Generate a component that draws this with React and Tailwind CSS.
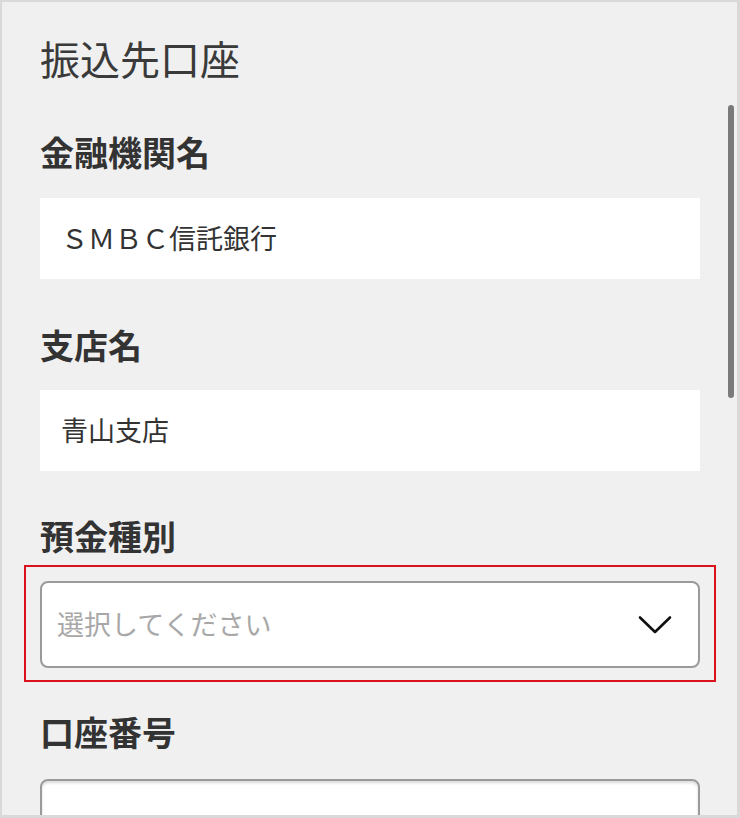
const font = { fontFamily: '"Noto Sans CJK JP", "Noto Sans", sans-serif' }

function Label({ children, className = '' }) {
  return (
    <div className={`h-[48px] leading-[48px] text-[34px] font-bold text-[#333] ${className}`}>
      {children}
    </div>
  )
}

function Chevron() {
  return (
    <svg width="34" height="20" viewBox="0 0 34 20" fill="none">
      <path d="M2 2.5 L17 17 L32 2.5" stroke="#111" strokeWidth="2.6" strokeLinecap="round" strokeLinejoin="round" />
    </svg>
  )
}

export default function App() {
  return (
    <div
      className="relative w-[740px] h-[818px] overflow-hidden bg-[#f0f0f0] border-t-2 border-l-2 border-r-[3px] border-b-[3px] border-[#d9d9d9]"
      style={font}
    >
      {/* scrollbar */}
      <div className="absolute top-[103px] right-[3px] w-[6px] h-[293px] rounded-full bg-[#7a7a7a]" />

      <div className="pt-[31px] pl-[38px] w-[698px]">
        <h1 className="h-[50px] leading-[50px] text-[40px] font-normal text-[#3a3a3a]">振込先口座</h1>

        {/* 金融機関名 */}
        <Label className="mt-[45px]">金融機関名</Label>
        <div className="mt-[22px] h-[81px] bg-white flex items-center pl-[21px] text-[27px] text-[#333]">
          ＳＭＢＣ信託銀行
        </div>

        {/* 支店名 */}
        <Label className="mt-[42px]">支店名</Label>
        <div className="mt-[21px] h-[81px] bg-white flex items-center pl-[21px] text-[27px] text-[#333]">
          青山支店
        </div>

        {/* 預金種別 */}
        <Label className="mt-[41px]">預金種別</Label>
        <div className="mt-[5px] -mx-4 border-2 border-[#d9121b] pt-[14px] pb-[12px] px-[14px]">
          <div className="h-[87px] bg-white border-2 border-[#9a9a9a] rounded-[8px] flex items-center justify-between pl-[15px] pr-[26px]">
            <span className="text-[27px] text-[#a8a8a8]">選択してください</span>
            <Chevron />
          </div>
        </div>

        {/* 口座番号 */}
        <Label className="mt-[26px]">口座番号</Label>
        <div className="mt-[23px] h-[87px] bg-white border-2 border-[#9a9a9a] rounded-[8px] shadow-[inset_0_2px_3px_rgba(0,0,0,0.15)]" />
      </div>
    </div>
  )
}
